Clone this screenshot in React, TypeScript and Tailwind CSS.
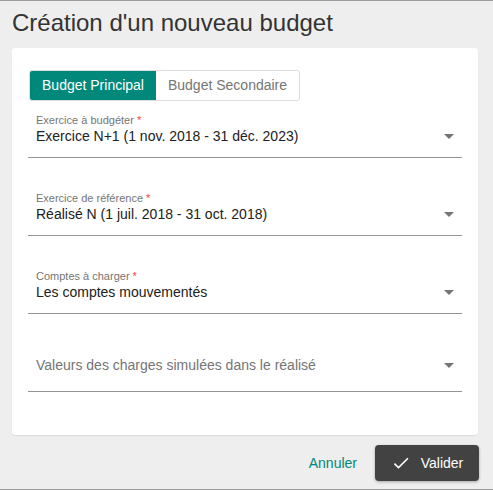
import React from "react";

function Arrow() {
  return (
    <svg width="10" height="5" viewBox="0 0 10 5" className="shrink-0">
      <path d="M0 0 L10 0 L5 5 Z" fill="#757575" />
    </svg>
  );
}

function Field({ label, value, first }: { label?: string; value: string; first?: boolean }) {
  return (
    <div
      className={`${first ? "h-[57px]" : "h-[78px]"} flex flex-col justify-end border-b border-[#949494] px-[8px] ${label ? "pb-[12px]" : "pb-[17px]"}`}
    >
      {label && (
        <div className="text-[11px] leading-[13px] text-[#757575]">
          {label} <span className="text-[#f44336]">*</span>
        </div>
      )}
      <div className="flex items-center justify-between">
        <span className={`text-[14px] leading-[18px] ${label ? "text-[#212121]" : "text-[#757575]"}`}>{value}</span>
        <Arrow />
      </div>
    </div>
  );
}

export default function App() {
  return (
    <div
      className="w-[493px] h-[490px] bg-[#eeeeee] border-t border-b border-[#9e9e9e] flex flex-col overflow-hidden"
      style={{ fontFamily: '"Liberation Sans", Arial, sans-serif' }}
    >
      <div className="px-[12px] pt-[8px] h-[47px] text-[24px] leading-[28px] text-[#333333]">
        Création d'un nouveau budget
      </div>
      <div className="ml-[12px] w-[466px] h-[387px] bg-white rounded-[3px] shadow-[0_1px_1px_rgba(0,0,0,0.08)] px-[16px] pt-[22px]">
        <div className="flex ml-[1px] w-[271px] h-[31px] border border-[#dddddd] rounded-[3px] overflow-hidden text-[14px]">
          <div className="w-[126px] bg-[#00897b] text-white flex items-center justify-center">Budget Principal</div>
          <div className="flex-1 text-[#757575] flex items-center justify-center">Budget Secondaire</div>
        </div>
        <Field first label="Exercice à budgéter" value="Exercice N+1 (1 nov. 2018 - 31 déc. 2023)" />
        <Field label="Exercice de référence" value="Réalisé N (1 juil. 2018 - 31 oct. 2018)" />
        <Field label="Comptes à charger" value="Les comptes mouvementés" />
        <Field value="Valeurs des charges simulées dans le réalisé" />
      </div>
      <div className="flex items-center justify-end pr-[14px] pt-[10px] gap-[18px]">
        <span className="text-[14px] text-[#00897b]">Annuler</span>
        <div className="w-[104px] h-[36px] bg-[#424242] rounded-[4px] shadow-[0_1px_3px_rgba(0,0,0,0.3)] flex items-center justify-center gap-[10px] text-white text-[14px]">
          <svg width="20" height="20" viewBox="0 0 24 24">
            <path d="M9 16.17L4.83 12l-1.42 1.41L9 19 21 7l-1.41-1.41z" fill="white" />
          </svg>
          <span>Valider</span>
        </div>
      </div>
    </div>
  );
}
